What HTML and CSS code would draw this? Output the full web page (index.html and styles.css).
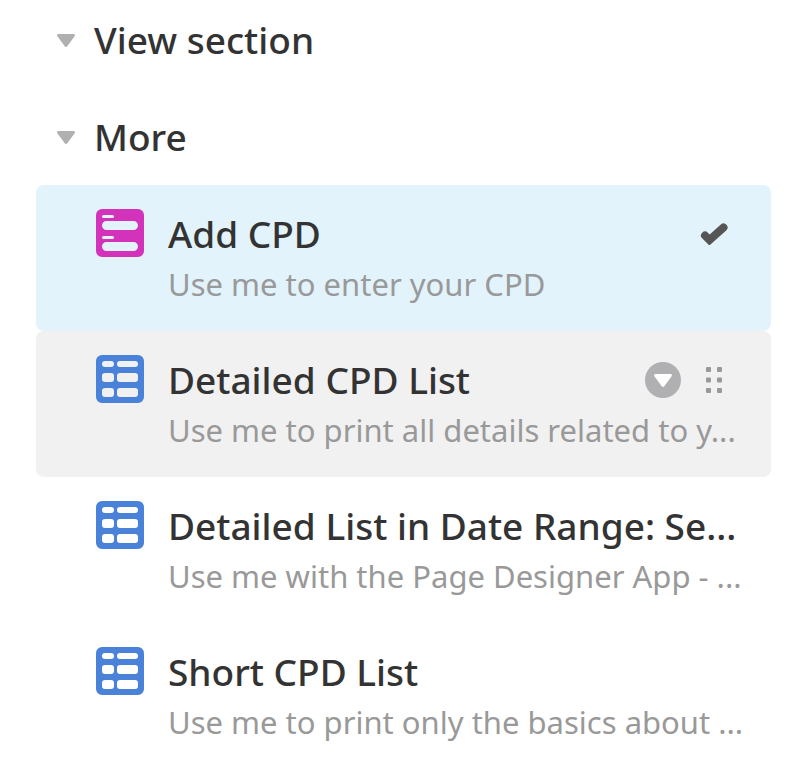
FILE: index.html
```
<!DOCTYPE html>
<html lang="en">
<head>
    <meta charset="UTF-8" />
    <meta name="viewport" content="width=device-width, initial-scale=1.0" />
    <title>Views</title>
    <link rel="stylesheet" href="styles.css">
</head>
<body>
    <!-- Shared icons -->
    <svg class="sprite" aria-hidden="true">
        <symbol id="icon-caret" viewBox="0 0 18 13">
            <path d="M1.6 0h14.8c1.4 0 2 1.3 1.2 2.3l-7.3 9.9c-.7 1-1.9 1-2.6 0L.4 2.3C-.4 1.300.2 0 1.600 0z" />
        </symbol>
        <symbol id="icon-form" viewBox="0 0 48 48">
            <path fill-rule="evenodd" d="M6 0h36a6 6 0 0 1 6 6v36a6 6 0 0 1-6 6H6a6 6 0 0 1-6-6V6a6 6 0 0 1 6-6zM7.500 6a1.500 1.500 0 0 0 0 3h9a1.500 1.500 0 0 0 0-3zM10.500 12a4.500 4.500 0 0 0 0 9h27a4.500 4.500 0 0 0 0-9zM7.500 27a1.500 1.500 0 0 0 0 3h9a1.500 1.500 0 0 0 0-3zM10.500 33a4.500 4.500 0 0 0 0 9h27a4.500 4.500 0 0 0 0-9z" />
        </symbol>
        <symbol id="icon-grid" viewBox="0 0 48 48">
            <path fill-rule="evenodd" d="M6 0h36a6 6 0 0 1 6 6v36a6 6 0 0 1-6 6H6a6 6 0 0 1-6-6V6a6 6 0 0 1 6-6zM9 6a3 3 0 0 0 0 6h6a3 3 0 0 0 0-6zM24 6a3 3 0 0 0 0 6h15a3 3 0 0 0 0-6zM9 18a3 3 0 0 0-3 3v3a3 3 0 0 0 3 3h6a3 3 0 0 0 3-3v-3a3 3 0 0 0-3-3zM24 18a3 3 0 0 0-3 3v3a3 3 0 0 0 3 3h15a3 3 0 0 0 3-3v-3a3 3 0 0 0-3-3zM9 33a3 3 0 0 0-3 3v3a3 3 0 0 0 3 3h6a3 3 0 0 0 3-3v-3a3 3 0 0 0-3-3zM24 33a3 3 0 0 0-3 3v3a3 3 0 0 0 3 3h15a3 3 0 0 0 3-3v-3a3 3 0 0 0-3-3z" />
        </symbol>
    </svg>

    <nav class="views">
        <section class="view-group">
            <h2 class="group-heading">
                <button class="group-toggle" type="button" aria-expanded="true">
                    <svg class="caret"><use href="#icon-caret" /></svg>
                    View section
                </button>
            </h2>
        </section>

        <section class="view-group">
            <h2 class="group-heading">
                <button class="group-toggle" type="button" aria-expanded="true">
                    <svg class="caret"><use href="#icon-caret" /></svg>
                    More
                </button>
            </h2>
            <ul class="view-list">
                <li class="view selected">
                    <svg class="view-icon form"><use href="#icon-form" /></svg>
                    <div class="view-body">
                        <div class="view-top">
                            <a class="view-name" href="#add-cpd">Add CPD</a>
                            <div class="view-actions">
                                <svg class="check" viewBox="0 0 28 22">
                                    <path d="M5 12.500 9.500 17 23.500 4.500" />
                                </svg>
                            </div>
                        </div>
                        <p class="view-desc">Use me to enter your CPD</p>
                    </div>
                </li>
                <li class="view hovered">
                    <svg class="view-icon"><use href="#icon-grid" /></svg>
                    <div class="view-body">
                        <div class="view-top">
                            <a class="view-name" href="#detailed-list">Detailed CPD List</a>
                            <div class="view-actions">
                                <button class="menu-btn" type="button" aria-label="View options">
                                    <svg class="caret"><use href="#icon-caret" /></svg>
                                </button>
                                <button class="drag-btn" type="button" aria-label="Reorder view">
                                    <svg class="drag-dots" viewBox="0 0 16 26">
                                        <rect width="5" height="5" rx="1" />
                                        <rect x="11" width="5" height="5" rx="1" />
                                        <rect y="10.500" width="5" height="5" rx="1" />
                                        <rect x="11" y="10.500" width="5" height="5" rx="1" />
                                        <rect y="21" width="5" height="5" rx="1" />
                                        <rect x="11" y="21" width="5" height="5" rx="1" />
                                    </svg>
                                </button>
                            </div>
                        </div>
                        <p class="view-desc">Use me to print all details related to y...</p>
                    </div>
                </li>
                <li class="view">
                    <svg class="view-icon"><use href="#icon-grid" /></svg>
                    <div class="view-body">
                        <div class="view-top">
                            <a class="view-name" href="#date-range">Detailed List in Date Range: Se...</a>
                        </div>
                        <p class="view-desc">Use me with the Page Designer App - ...</p>
                    </div>
                </li>
                <li class="view">
                    <svg class="view-icon"><use href="#icon-grid" /></svg>
                    <div class="view-body">
                        <div class="view-top">
                            <a class="view-name" href="#short-list">Short CPD List</a>
                        </div>
                        <p class="view-desc">Use me to print only the basics about ...</p>
                    </div>
                </li>
            </ul>
        </section>
    </nav>
</body>
</html>
```
FILE: styles.css
```
* {
    box-sizing: border-box;
}
body {
    margin: 0;
    background: #fff;
    color: #333;
    font-family: "Noto Sans", "Open Sans", sans-serif;
}
button {
    margin: 0;
    padding: 0;
    border: none;
    background: none;
    color: inherit;
    font: inherit;
    cursor: pointer;
}
.sprite {
    display: none;
}

/* Sections */
.views {
    display: flex;
    flex-direction: column;
    gap: 24px;
    padding: 15px 33px 0 36px;
}
.group-heading {
    margin: 0;
    padding-bottom: 23px;
    font-size: 37px;
    font-weight: 500;
    line-height: 50px;
}
.group-toggle {
    display: flex;
    align-items: center;
    gap: 19px;
    padding-left: 21px;
}
.caret {
    width: 18px;
    height: 13px;
    fill: #b0b0b2;
}

/* View rows */
.view-list {
    margin: 0;
    padding: 0;
    list-style: none;
}
.view {
    display: flex;
    gap: 24px;
    padding: 24px 24px 22px 60px;
    border-radius: 8px;
}
.view.selected {
    background: #e2f3fc;
}
.view.hovered {
    background: #f1f1f1;
}
.view-icon {
    flex: none;
    width: 48px;
    height: 48px;
    fill: #4a82d9;
}
.view-icon.form {
    fill: #d333ba;
}
.view-body {
    flex: 1;
    min-width: 0;
    white-space: nowrap;
}
.view-top {
    display: flex;
    justify-content: space-between;
    align-items: center;
}
.view-name {
    color: #333;
    font-size: 37px;
    font-weight: 500;
    line-height: 50px;
    text-decoration: none;
}
.view-desc {
    margin: 0;
    color: #999;
    font-size: 31px;
    line-height: 50px;
}

/* Row actions */
.view-actions {
    display: flex;
    align-items: center;
    gap: 19px;
    margin-right: 19px;
}
.check {
    width: 28px;
    height: 22px;
    fill: none;
    stroke: #555;
    stroke-width: 8;
    stroke-linecap: round;
}
.menu-btn {
    display: flex;
    align-items: center;
    justify-content: center;
    width: 36px;
    height: 36px;
    border-radius: 50%;
    background: #b0b0b2;
}
.menu-btn .caret {
    fill: #fff;
}
.drag-btn {
    display: flex;
    justify-content: center;
    width: 28px;
    cursor: grab;
}
.drag-dots {
    width: 16px;
    height: 26px;
    fill: #999;
}
```
